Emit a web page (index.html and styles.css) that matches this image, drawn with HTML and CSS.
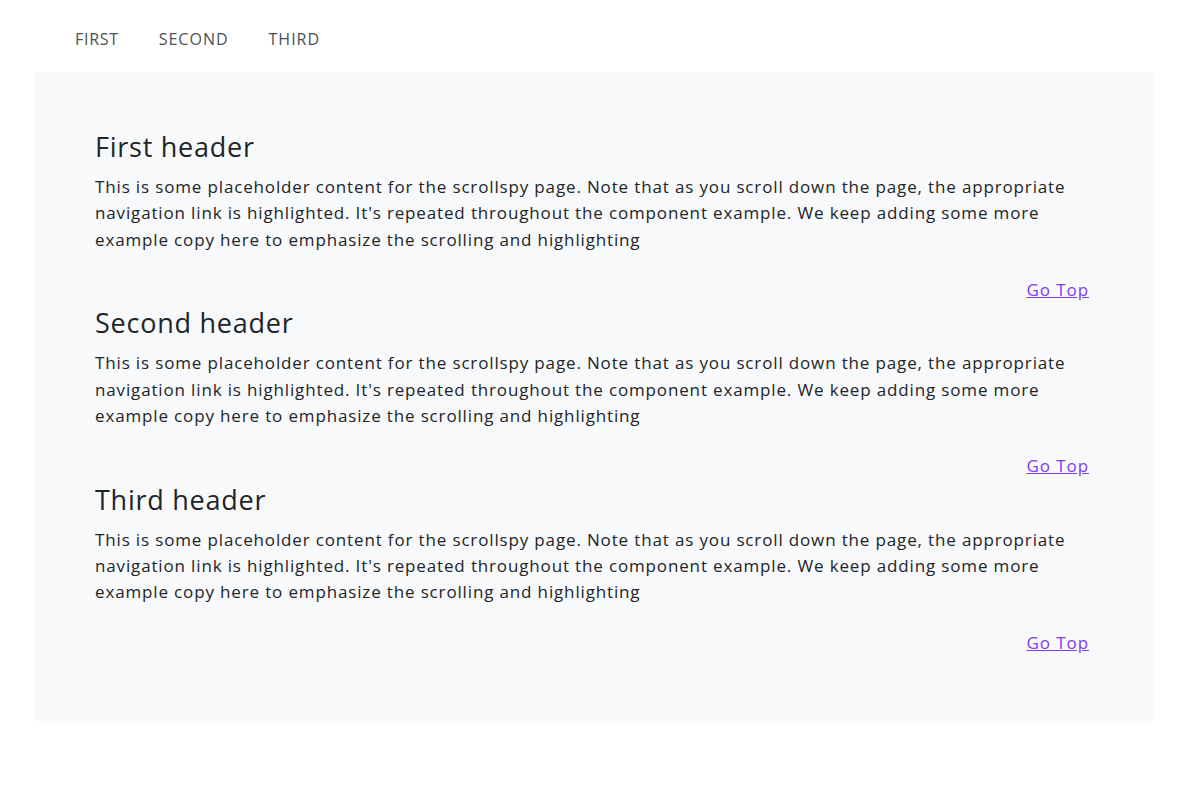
FILE: index.html
```html
<!DOCTYPE html>
<html lang="en">
<head>
<meta charset="utf-8">
<title>Scrollspy</title>
<link rel="stylesheet" href="styles.css">
</head>
<body>
<nav class="nav">
  <a class="nav-link" href="#first">FIRST</a>
  <a class="nav-link" href="#second">SECOND</a>
  <a class="nav-link" href="#third">THIRD</a>
</nav>
<main class="panel">
  <section class="section" id="first">
    <h2 class="title">First header</h2>
    <p class="text">This is some placeholder content for the scrollspy page. Note that as you scroll down the page, the appropriate navigation link is highlighted. It's repeated throughout the component example. We keep adding some more example copy here to emphasize the scrolling and highlighting</p>
    <div class="top"><a href="#">Go Top</a></div>
  </section>
  <section class="section" id="second">
    <h2 class="title">Second header</h2>
    <p class="text">This is some placeholder content for the scrollspy page. Note that as you scroll down the page, the appropriate navigation link is highlighted. It's repeated throughout the component example. We keep adding some more example copy here to emphasize the scrolling and highlighting</p>
    <div class="top"><a href="#">Go Top</a></div>
  </section>
  <section class="section" id="third">
    <h2 class="title">Third header</h2>
    <p class="text">This is some placeholder content for the scrollspy page. Note that as you scroll down the page, the appropriate navigation link is highlighted. It's repeated throughout the component example. We keep adding some more example copy here to emphasize the scrolling and highlighting</p>
    <div class="top"><a href="#">Go Top</a></div>
  </section>
</main>
</body>
</html>
```
FILE: styles.css
```css
* { box-sizing: border-box; }
body {
  margin: 0;
  padding: 0 33px 0 35px;
  font-family: "Open Sans", "Liberation Sans", sans-serif;
  color: #212529;
  background: #fff;
}
.nav {
  display: flex;
  height: 72px;
  align-items: center;
  padding-left: 20px;
  padding-top: 6px;
}
.nav-link {
  padding: 0 20px;
  font-size: 16px;
  color: #495057;
  text-decoration: none;
  letter-spacing: 1px;
}
.nav-link:first-child { letter-spacing: 0.7px; }
.panel {
  background: #f8f9fa;
  padding: 59px 65px 66px 60px;
}
.section { display: flex; flex-direction: column; }
.title {
  margin: 0 0 12px;
  font-size: 27px;
  font-weight: 500;
  line-height: 31px;
  letter-spacing: 0.75px;
}
.text {
  margin: 0 0 25px;
  font-size: 17px;
  line-height: 26.3px;
  letter-spacing: 0.85px;
  max-width: 990px;
}
.top {
  text-align: right;
  font-size: 17px;
  line-height: 24px;
  margin-bottom: 5.5px;
  letter-spacing: 0.9px;
}
.section:last-child .top { margin-bottom: 0; }
.top a { color: #7f3cf0; }
```
